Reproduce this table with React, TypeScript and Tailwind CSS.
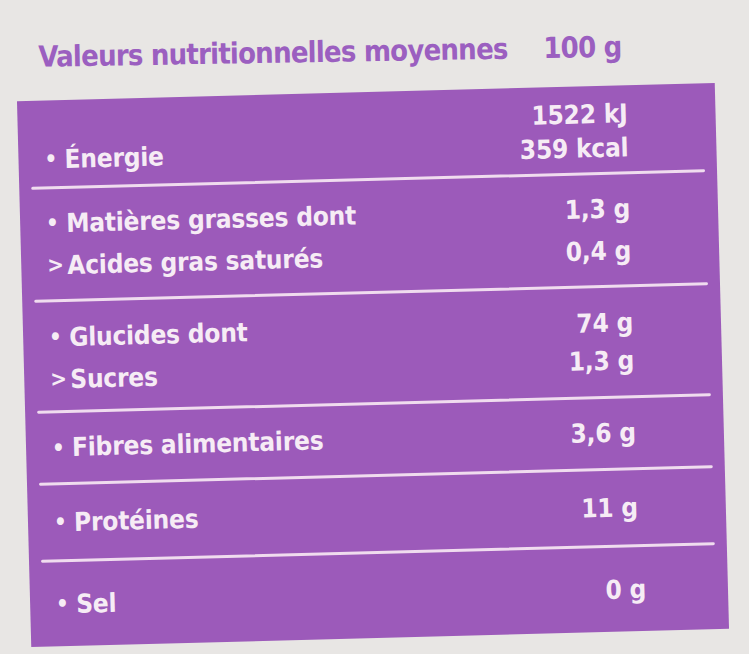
import React from "react";

const font = { fontFamily: '"DejaVu Sans Condensed", "DejaVu Sans", sans-serif' };

function Line() {
  return <div className="mx-3 h-[3px] bg-[#f0dcef] rounded-full" />;
}

function Label({ children, bullet = true }: { children: React.ReactNode; bullet?: boolean }) {
  return (
    <div className="flex items-center">
      <span className="w-[20px] text-[22px] leading-none">{bullet ? "•" : ">"}</span>
      <span>{children}</span>
    </div>
  );
}

export default function App() {
  return (
    <div
      className="w-[749px] h-[654px] overflow-hidden bg-[#e8e6e4] text-[#f6ecf5] font-bold"
      style={font}
    >
      <div className="pt-[32px] pl-[38px] flex items-end whitespace-nowrap text-[#9b5fc0] text-[29px] leading-[38px] tracking-[-0.8px] -rotate-1">
        <span className="w-[505px]">Valeurs nutritionnelles moyennes</span>
        <span>100 g</span>
      </div>
      <div className="ml-[24px] mt-[22px] w-[698px] h-[546px] bg-[#9c5aba] -rotate-[1.5deg] flex flex-col text-[26px] tracking-[-0.2px] whitespace-nowrap">
        <div className="h-[86px] flex items-end justify-between pl-[26px] pr-[88px] pb-[7px]">
          <div className="leading-[34px] mb-[3px]"><Label>Énergie</Label></div>
          <div className="flex flex-col items-end leading-[34px]">
            <span>1522 kJ</span>
            <span>359 kcal</span>
          </div>
        </div>
        <Line />
        <div className="h-[110px] flex items-center justify-between pl-[26px] pr-[88px] leading-[42px]">
          <div className="flex flex-col">
            <Label>Matières grasses dont</Label>
            <Label bullet={false}>Acides gras saturés</Label>
          </div>
          <div className="flex flex-col items-end">
            <span>1,3 g</span>
            <span>0,4 g</span>
          </div>
        </div>
        <Line />
        <div className="h-[108px] flex items-center justify-between pl-[26px] pr-[88px] leading-[42px]">
          <div className="flex flex-col mt-[4px]">
            <Label>Glucides dont</Label>
            <Label bullet={false}>Sucres</Label>
          </div>
          <div className="flex flex-col items-end leading-[38px]">
            <span>74 g</span>
            <span>1,3 g</span>
          </div>
        </div>
        <Line />
        <div className="h-[69px] flex items-center justify-between pl-[26px] pr-[88px]">
          <Label>Fibres alimentaires</Label>
          <span>3,6 g</span>
        </div>
        <Line />
        <div className="h-[74px] flex items-center justify-between pl-[26px] pr-[88px]">
          <Label>Protéines</Label>
          <span>11 g</span>
        </div>
        <Line />
        <div className="flex-1 flex items-center justify-between pl-[26px] pr-[82px]">
          <Label>Sel</Label>
          <span>0 g</span>
        </div>
      </div>
    </div>
  );
}
